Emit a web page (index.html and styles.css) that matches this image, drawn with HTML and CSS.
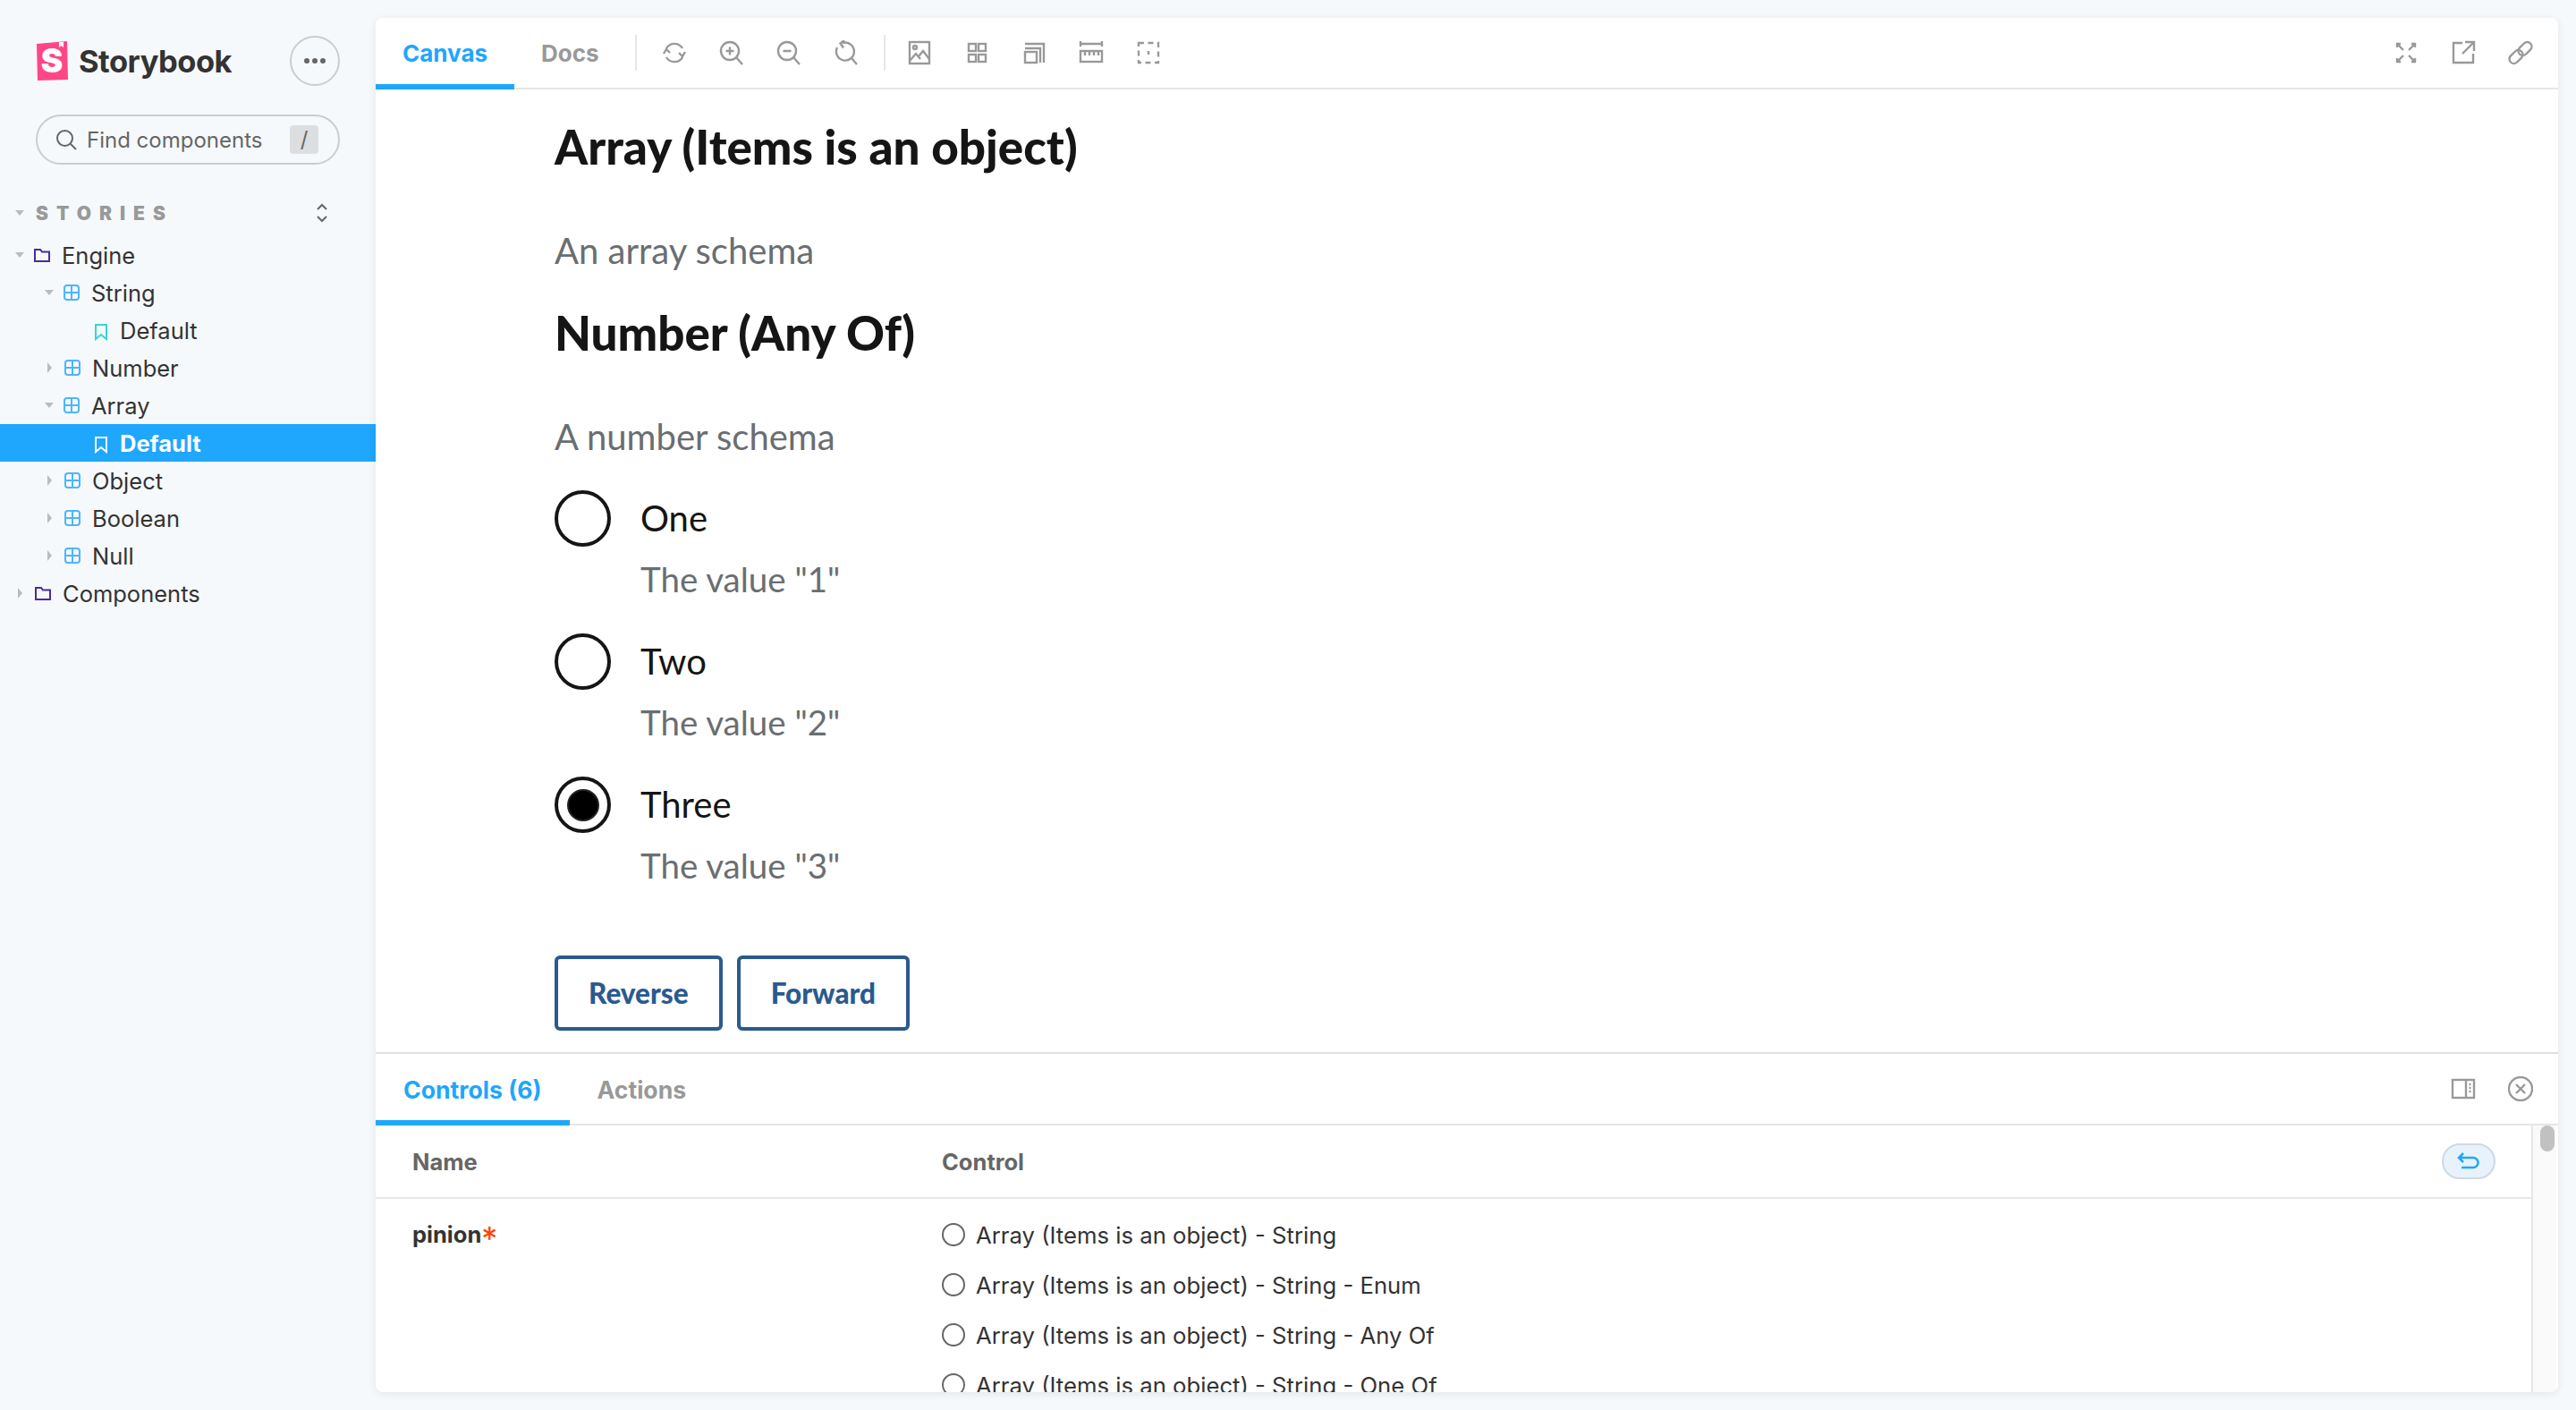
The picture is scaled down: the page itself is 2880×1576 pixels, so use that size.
FILE: index.html
```html
<!DOCTYPE html>
<html lang="en">
<head>
    <meta charset="UTF-8">
    <meta name="viewport" content="width=device-width, initial-scale=1.0">
    <title>Storybook</title>
    <link rel="stylesheet" href="styles.css">
</head>
<body>
    <svg class="sprite" xmlns="http://www.w3.org/2000/svg">
        <symbol id="i-folder" viewBox="0 0 18 16"><path d="M1 2h6l2 2.500h8v10.500h-16z" fill="none" stroke="#4b2a9e" stroke-width="2"/></symbol>
        <symbol id="i-comp" viewBox="0 0 18 18"><rect x="1" y="1" width="16" height="16" rx="3" fill="none" stroke="#4db5fd" stroke-width="2"/><path d="M9 1v16M1 9h16" stroke="#4db5fd" stroke-width="2"/></symbol>
        <symbol id="i-mark" viewBox="0 0 16 20"><path d="M2 2h12v16l-6-5-6 5z" fill="none" stroke="currentColor" stroke-width="2"/></symbol>
    </svg>

    <div class="app">
        <aside class="sidebar">
            <div class="brand">
                <svg class="logo" viewBox="0 0 36 44">
                    <path d="M1 3 35 0 36 43 2 44z" fill="#ff4785"/>
                    <text x="18" y="35" text-anchor="middle" class="logo-s">S</text>
                    <path d="M26 1h5v6l-2.500-2-2.500 2z" fill="#fff"/>
                </svg>
                <span class="brand-name">Storybook</span>
                <button class="menu-btn"><span></span><span></span><span></span></button>
            </div>
            <div class="search">
                <svg class="search-icon" viewBox="0 0 24 24"><circle cx="10.500" cy="10.500" r="8.500"/><path d="M17 17l6 6"/></svg>
                <span class="search-text">Find components</span>
                <span class="search-key">/</span>
            </div>
            <div class="stories-head">
                <span class="caret down"></span>
                <span class="stories-title">STORIES</span>
                <svg class="expand" viewBox="0 0 14 22"><path d="M2 7l5-5 5 5M2 15l5 5 5-5"/></svg>
            </div>
            <ul class="tree">
                <li class="row depth-0"><span class="caret down"></span><svg class="ticon"><use href="#i-folder"/></svg>Engine</li>
                <li class="row depth-1"><span class="caret down"></span><svg class="ticon"><use href="#i-comp"/></svg>String</li>
                <li class="row depth-2"><span class="caret none"></span><svg class="ticon mark"><use href="#i-mark"/></svg>Default</li>
                <li class="row depth-1"><span class="caret right"></span><svg class="ticon"><use href="#i-comp"/></svg>Number</li>
                <li class="row depth-1"><span class="caret down"></span><svg class="ticon"><use href="#i-comp"/></svg>Array</li>
                <li class="row depth-2 selected"><span class="caret none"></span><svg class="ticon mark"><use href="#i-mark"/></svg>Default</li>
                <li class="row depth-1"><span class="caret right"></span><svg class="ticon"><use href="#i-comp"/></svg>Object</li>
                <li class="row depth-1"><span class="caret right"></span><svg class="ticon"><use href="#i-comp"/></svg>Boolean</li>
                <li class="row depth-1"><span class="caret right"></span><svg class="ticon"><use href="#i-comp"/></svg>Null</li>
                <li class="row depth-0"><span class="caret right"></span><svg class="ticon"><use href="#i-folder"/></svg>Components</li>
            </ul>
        </aside>

        <main class="panel">
            <div class="toolbar">
                <a class="tab active">Canvas</a>
                <a class="tab">Docs</a>
                <span class="sep first"></span>
                <div class="tools">
                    <svg class="tool" viewBox="0 0 28 28"><path d="M23 9A10.500 10.500 0 0 0 5 9M5 19a10.500 10.500 0 0 0 18 0"/><path d="M2 15l3-5 4 4M26 13l-3 5-4-4"/></svg>
                    <svg class="tool" viewBox="0 0 28 28"><circle cx="12" cy="12" r="10"/><path d="M19 19l7 8M12 7.500v9M7.500 12h9"/></svg>
                    <svg class="tool" viewBox="0 0 28 28"><circle cx="12" cy="12" r="10"/><path d="M19 19l7 8M7.500 12h9"/></svg>
                    <svg class="tool" viewBox="0 0 28 28"><path d="M4 8A10 10 0 1 0 10 3M20 20l6 7M12 0 7.500 3.500l3.500 5"/></svg>
                </div>
                <span class="sep"></span>
                <div class="tools second">
                    <svg class="tool" viewBox="0 0 28 28"><rect x="3" y="2" width="22" height="24"/><circle cx="9" cy="8" r="2"/><path d="M3 23l7-8 5 6M13 18l5-6 7 9"/></svg>
                    <svg class="tool" viewBox="0 0 28 28"><rect x="5" y="4" width="8" height="8"/><rect x="16" y="4" width="8" height="8"/><rect x="5" y="16" width="8" height="8"/><rect x="16" y="16" width="8" height="8"/></svg>
                    <svg class="tool" viewBox="0 0 28 28"><rect x="4" y="13" width="13" height="12"/><path d="M4 9h17v16M4 4h21v21"/></svg>
                    <svg class="tool" viewBox="0 0 28 28"><path d="M2 4h24M2 1v6M26 1v6"/><rect x="2" y="12" width="24" height="12"/><path d="M7 12v5M12 12v5M17 12v5M22 12v5"/></svg>
                    <svg class="tool" viewBox="0 0 28 28"><rect x="3" y="3" width="22" height="22" stroke-dasharray="6 4.500"/><path d="M14 12v4"/></svg>
                </div>
                <div class="tools right">
                    <svg class="tool" viewBox="0 0 28 28"><path d="M4 4l7 7M20 4h4v4M24 4l-7 7M4 24l7-7M4 20v4h4M24 24l-7-7M24 20v4h-4M4 8V4h4"/></svg>
                    <svg class="tool" viewBox="0 0 28 28"><path d="M13 3H3v22h22V15M16 2h10v10M26 2 13 15"/></svg>
                    <svg class="tool" viewBox="0 0 28 28"><rect x="14" y="1" width="10" height="17" rx="5" transform="rotate(45 19 9.500)"/><rect x="4" y="10" width="10" height="17" rx="5" transform="rotate(45 9 18.500)"/></svg>
                </div>
            </div>

            <section class="canvas">
                <h2 class="title">Array (Items is an object)</h2>
                <p class="desc">An array schema</p>
                <h2 class="title second">Number (Any Of)</h2>
                <p class="desc">A number schema</p>
                <div class="choice">
                    <span class="radio"></span>
                    <div><div class="choice-label">One</div><div class="choice-desc">The value "1"</div></div>
                </div>
                <div class="choice">
                    <span class="radio"></span>
                    <div><div class="choice-label">Two</div><div class="choice-desc">The value "2"</div></div>
                </div>
                <div class="choice">
                    <span class="radio checked"></span>
                    <div><div class="choice-label">Three</div><div class="choice-desc">The value "3"</div></div>
                </div>
                <div class="actions">
                    <button class="button">Reverse</button>
                    <button class="button">Forward</button>
                </div>
            </section>

            <section class="addons">
                <div class="addon-tabs">
                    <a class="addon-tab active">Controls (6)</a>
                    <a class="addon-tab">Actions</a>
                    <div class="tools right">
                        <svg class="tool" viewBox="0 0 28 28"><rect x="2" y="4" width="24" height="20"/><path d="M17 4v20M20.500 9h2M20.500 13h2M20.500 17h2"/></svg>
                        <svg class="tool" viewBox="0 0 28 28"><circle cx="14" cy="14" r="13"/><path d="M9 9l10 10M19 9 9 19"/></svg>
                    </div>
                </div>
                <div class="addon-body">
                    <div class="table">
                        <div class="table-head">
                            <span class="col-name">Name</span>
                            <span class="col-control">Control</span>
                            <button class="reset"><svg viewBox="0 0 26 20"><path d="M7 1 2 6l5 5M2 6h16a5 5 0 0 1 0 11H5"/></svg></button>
                        </div>
                        <div class="table-row">
                            <div class="col-name prop">pinion<span class="req">*</span></div>
                            <div class="options">
                                <div class="option"><span class="opt-radio"></span>Array (Items is an object) - String</div>
                                <div class="option"><span class="opt-radio"></span>Array (Items is an object) - String - Enum</div>
                                <div class="option"><span class="opt-radio"></span>Array (Items is an object) - String - Any Of</div>
                                <div class="option"><span class="opt-radio"></span>Array (Items is an object) - String - One Of</div>
                            </div>
                        </div>
                    </div>
                    <div class="scrollbar"><span class="thumb"></span></div>
                </div>
            </section>
        </main>
    </div>
</body>
</html>
```

FILE: styles.css
```css
* {
    box-sizing: border-box;
}
body {
    margin: 0;
    height: 1576px;
    overflow: hidden;
    background: #f6f9fc;
    color: #333;
    font-family: 'Inter', sans-serif;
}
.sprite {
    display: none;
}
.app {
    display: flex;
    height: 100%;
}

/* sidebar */
.sidebar {
    width: 420px;
    flex: none;
}
.brand {
    display: flex;
    align-items: center;
    height: 56px;
    margin: 40px 40px 0;
}
.logo {
    width: 36px;
    height: 44px;
}
.logo-s {
    font-family: 'Inter', sans-serif;
    font-size: 37px;
    font-weight: 900;
    fill: #fff;
}
.brand-name {
    margin-left: 12px;
    font-size: 34.500px;
    font-weight: 700;
    letter-spacing: -0.5px;
    color: #333;
}
.menu-btn {
    display: flex;
    justify-content: center;
    align-items: center;
    gap: 3px;
    width: 56px;
    height: 56px;
    margin-left: auto;
    padding: 0;
    background: none;
    border: 2px solid #ccc;
    border-radius: 50%;
}
.menu-btn span {
    width: 6px;
    height: 6px;
    border-radius: 50%;
    background: #666;
}
.search {
    display: flex;
    align-items: center;
    height: 56px;
    margin: 32px 40px 0;
    padding: 0 22px 0 20px;
    border: 2px solid #ccc;
    border-radius: 28px;
}
.search-icon {
    width: 24px;
    height: 24px;
    fill: none;
    stroke: #666;
    stroke-width: 2;
}
.search-text {
    margin-left: 11px;
    font-size: 24px;
    color: #666;
}
.search-key {
    width: 32px;
    height: 32px;
    margin-left: auto;
    background: #dcdee0;
    border-radius: 4px;
    font-size: 24px;
    line-height: 32px;
    text-align: center;
    color: #666;
}
.stories-head {
    display: flex;
    align-items: center;
    height: 24px;
    margin-top: 42px;
    padding: 0 53px 0 17px;
}
.stories-title {
    margin-left: 13px;
    font-size: 21px;
    font-weight: 900;
    letter-spacing: 9px;
    color: #999;
}
.expand {
    width: 14px;
    height: 22px;
    margin-left: auto;
    fill: none;
    stroke: #666;
    stroke-width: 2;
}
.caret {
    flex: none;
    display: block;
    width: 0;
    height: 0;
}
.caret.down {
    border-style: solid;
    border-width: 6px 5.500px 0;
    border-color: #bbb transparent transparent;
}
.caret.right {
    margin: 0 3px;
    border-style: solid;
    border-width: 6px 0 6px 5px;
    border-color: transparent transparent transparent #bbb;
}
.caret.none {
    width: 11px;
}
.tree {
    margin: 14px 0 0;
    padding: 0;
    list-style: none;
}
.row {
    display: flex;
    align-items: center;
    height: 42px;
    font-size: 25.500px;
    color: #333;
}
.depth-0 {
    padding-left: 17px;
}
.depth-1 {
    padding-left: 50px;
}
.depth-2 {
    padding-left: 83px;
}
.ticon {
    width: 18px;
    height: 18px;
    margin: 0 13px 0 11px;
    flex: none;
}
.ticon.mark {
    width: 16px;
    height: 20px;
    margin-top: 4px;
    color: #37d5d3;
}
.row.selected {
    background: #1ea7fd;
    color: #fff;
    font-weight: 700;
}
.row.selected .ticon.mark {
    color: #fff;
}

/* main panel */
.panel {
    display: flex;
    flex-direction: column;
    flex: 1;
    margin: 20px 20px 20px 0;
    background: #fff;
    border-radius: 8px;
    overflow: hidden;
    box-shadow: 0 2px 10px rgba(0, 0, 0, 0.08);
}
.toolbar {
    display: flex;
    align-items: stretch;
    flex: none;
    height: 80px;
    border-bottom: 2px solid #e6e6e6;
}
.tab {
    padding: 0 30px;
    font-size: 26px;
    font-weight: 700;
    line-height: 80px;
    color: #999;
}
.tab.active {
    height: 80px;
    color: #1ea7fd;
    border-bottom: 6px solid #1ea7fd;
}
.sep {
    align-self: center;
    width: 2px;
    height: 40px;
    background: #e6e6e6;
}
.sep.first {
    margin-left: 10px;
}
.tools {
    display: flex;
    align-items: center;
    gap: 36px;
    margin: 0 28px;
}
.tools.second {
    margin-left: 24px;
}
.tools.right {
    margin-left: auto;
    margin-right: 28px;
}
.tool {
    width: 28px;
    height: 28px;
    fill: none;
    stroke: #999;
    stroke-width: 2.400;
}

/* canvas */
.canvas {
    flex: none;
    height: 1076px;
    padding: 34px 0 0 200px;
    overflow: hidden;
    color: #151515;
    font-family: 'Lato', sans-serif;
}
.title {
    margin: 0;
    font-size: 53px;
    font-weight: 900;
    line-height: 60px;
}
.title.second {
    margin-top: 39px;
}
.desc {
    margin: 63px 0 0;
    font-size: 40px;
    line-height: 46px;
    color: #6a6e71;
}
.choice {
    display: flex;
    gap: 33px;
    height: 160px;
    margin-top: 0;
}
.desc + .choice {
    margin-top: 37px;
}
.radio {
    display: flex;
    justify-content: center;
    align-items: center;
    flex: none;
    width: 63px;
    height: 63px;
    border: 4px solid #151515;
    border-radius: 50%;
}
.radio.checked::after {
    content: "";
    width: 32px;
    height: 32px;
    background: #000;
    border: 2px solid #222;
    border-radius: 50%;
}
.choice-label {
    font-size: 40px;
    line-height: 63px;
}
.choice-desc {
    margin-top: 13px;
    font-size: 38.500px;
    line-height: 46px;
    color: #6a6e71;
}
.actions {
    display: flex;
    gap: 16px;
    margin-top: 40px;
}
.button {
    height: 84px;
    padding: 0 34px;
    background: #fff;
    border: 4px solid #2a5a8f;
    border-radius: 6px;
    font-family: 'Lato', sans-serif;
    font-size: 31.500px;
    font-weight: 900;
    color: #2a5a8f;
}

/* addons */
.addons {
    display: flex;
    flex-direction: column;
    flex: 1;
    min-height: 0;
    border-top: 2px solid #e0e0e0;
}
.addon-tabs {
    display: flex;
    align-items: stretch;
    flex: none;
    height: 80px;
    border-bottom: 2px solid #e6e6e6;
}
.addon-tab {
    padding: 0 31px;
    font-size: 26.600px;
    font-weight: 700;
    line-height: 80px;
    color: #999;
}
.addon-tab.active {
    height: 80px;
    color: #1ea7fd;
    border-bottom: 6px solid #1ea7fd;
}
.addon-body {
    display: flex;
    flex: 1;
    min-height: 0;
}
.table {
    flex: 1;
    min-width: 0;
    overflow: hidden;
    font-size: 25.500px;
}
.table-head {
    display: flex;
    align-items: center;
    height: 82px;
    padding-right: 40px;
    border-bottom: 2px solid #e6e6e6;
    font-weight: 700;
    color: #666;
}
.col-name {
    width: 633px;
    padding-left: 41px;
}
.reset {
    display: flex;
    justify-content: center;
    align-items: center;
    width: 60px;
    height: 40px;
    margin-left: auto;
    padding: 0;
    background: #e8f2fc;
    border: 2px solid #cfd9e3;
    border-radius: 20px;
}
.reset svg {
    width: 26px;
    height: 20px;
    fill: none;
    stroke: #1ea7fd;
    stroke-width: 2.500;
}
.table-row {
    display: flex;
    padding-top: 12px;
}
.prop {
    font-weight: 700;
    line-height: 56px;
    color: #333;
}
.req {
    font-size: 36px;
    font-weight: 400;
    line-height: 0;
    vertical-align: -8px;
    color: #ff4400;
}
.option {
    display: flex;
    align-items: center;
    gap: 12px;
    height: 56px;
    font-size: 25.700px;
    color: #333;
}
.opt-radio {
    width: 26px;
    height: 26px;
    border: 2px solid #666;
    border-radius: 50%;
}
.scrollbar {
    flex: none;
    width: 28px;
    margin-right: 2px;
    padding-left: 8px;
    background: #fafafa;
    border-left: 2px solid #e6e6e6;
}
.thumb {
    display: block;
    width: 16px;
    height: 29px;
    background: #c1c1c1;
    border-radius: 8px;
}
```
